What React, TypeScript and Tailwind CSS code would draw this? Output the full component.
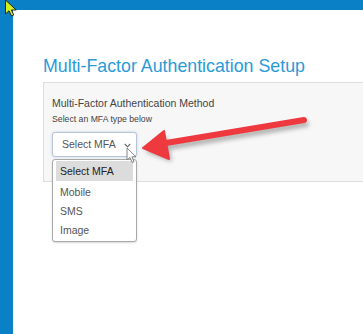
import React from "react";

export default function App() {
  const font = { fontFamily: '"Liberation Sans", Arial, sans-serif' };
  return (
    <div className="relative w-[363px] h-[334px] overflow-hidden bg-[#0a80c6] pt-[10px] pl-[13px]" style={font}>
      <div className="h-full bg-white pl-[30px] pt-[45px]">
        <h1 className="text-[17.8px] leading-[22px] text-[#2a9bd8] whitespace-nowrap">Multi-Factor Authentication Setup</h1>
        <div className="mt-[5px] h-[100px] border border-r-0 border-[#dedede] bg-[#f7f7f7] pl-[8px] pt-[13px]">
          <div className="text-[10.5px] leading-[14px] text-[#444] whitespace-nowrap">Multi-Factor Authentication Method</div>
          <div className="mt-[4px] text-[8.7px] leading-[11px] text-[#444] whitespace-nowrap">Select an MFA type below</div>
          <div className="relative mt-[7px] w-[85px]">
            <div className="flex h-[25px] items-center justify-between rounded-[3px] border border-[#b8c4d4] bg-white pl-[9px] pr-[5px] shadow-[0_0_3px_rgba(100,150,220,0.35)]">
              <span className="text-[10.5px] text-[#555]">Select MFA</span>
              <svg width="7" height="5" viewBox="0 0 7 5" className="mt-[2px]">
                <path d="M0.8 1 L3.5 3.8 L6.2 1" fill="none" stroke="#666" strokeWidth="1.1" />
              </svg>
            </div>
            <div className="absolute left-0 top-[27px] w-[85px] rounded-[3px] border border-[#a9a9a9] bg-white px-[3px] pt-[1px] pb-[1px] shadow-[0_1px_2px_rgba(0,0,0,0.15)]">
              <div className="h-[20px] bg-[#dcdcdc] pl-[4px] text-[10.5px] leading-[20px] text-[#222]">Select MFA</div>
              <div className="mt-[2px] h-[19px] pl-[4px] text-[10.5px] leading-[19px] text-[#555]">Mobile</div>
              <div className="h-[19px] pl-[4px] text-[10.5px] leading-[19px] text-[#555]">SMS</div>
              <div className="h-[19px] pl-[4px] text-[10.5px] leading-[19px] text-[#555]">Image</div>
            </div>
          </div>
        </div>
      </div>

      {/* red annotation arrow */}
      <svg className="absolute left-0 top-0" width="363" height="334" viewBox="0 0 363 334">
        <defs>
          <filter id="sh" x="-20%" y="-50%" width="140%" height="200%">
            <feGaussianBlur stdDeviation="2" />
          </filter>
        </defs>
        <g opacity="0.35" transform="translate(2,4)" filter="url(#sh)">
          <line x1="304" y1="120" x2="160" y2="144" stroke="#333" strokeWidth="6" strokeLinecap="round" />
          <path d="M143 148 L165 132 L170 158 Z" fill="#333" />
        </g>
        <line x1="304" y1="120" x2="160" y2="144" stroke="#ee3a3f" strokeWidth="6" strokeLinecap="round" />
        <path d="M143 148 L164 131 L169 159 Z" fill="#ee3a3f" stroke="#ee3a3f" strokeWidth="2" strokeLinejoin="round" />
      </svg>

      {/* mouse cursor (white) */}
      <svg className="absolute left-[126px] top-[147px]" width="12" height="17" viewBox="0 0 12 17">
        <path d="M1 1 L1 13 L4 10.5 L6.2 15.5 L8 14.7 L5.9 9.8 L10 9.8 Z" fill="#fff" stroke="#777" strokeWidth="0.9" strokeLinejoin="round" />
      </svg>

      {/* yellow cursor top-left */}
      <svg className="absolute left-[4px] top-[-1px]" width="14" height="19" viewBox="0 0 14 19">
        <path d="M1.5 1 L1.5 15 L5 11.8 L7.5 17 L9.8 16 L7.4 11 L12.2 11 Z" fill="#d4f01c" stroke="#222" strokeWidth="1" strokeLinejoin="round" />
      </svg>
    </div>
  );
}
